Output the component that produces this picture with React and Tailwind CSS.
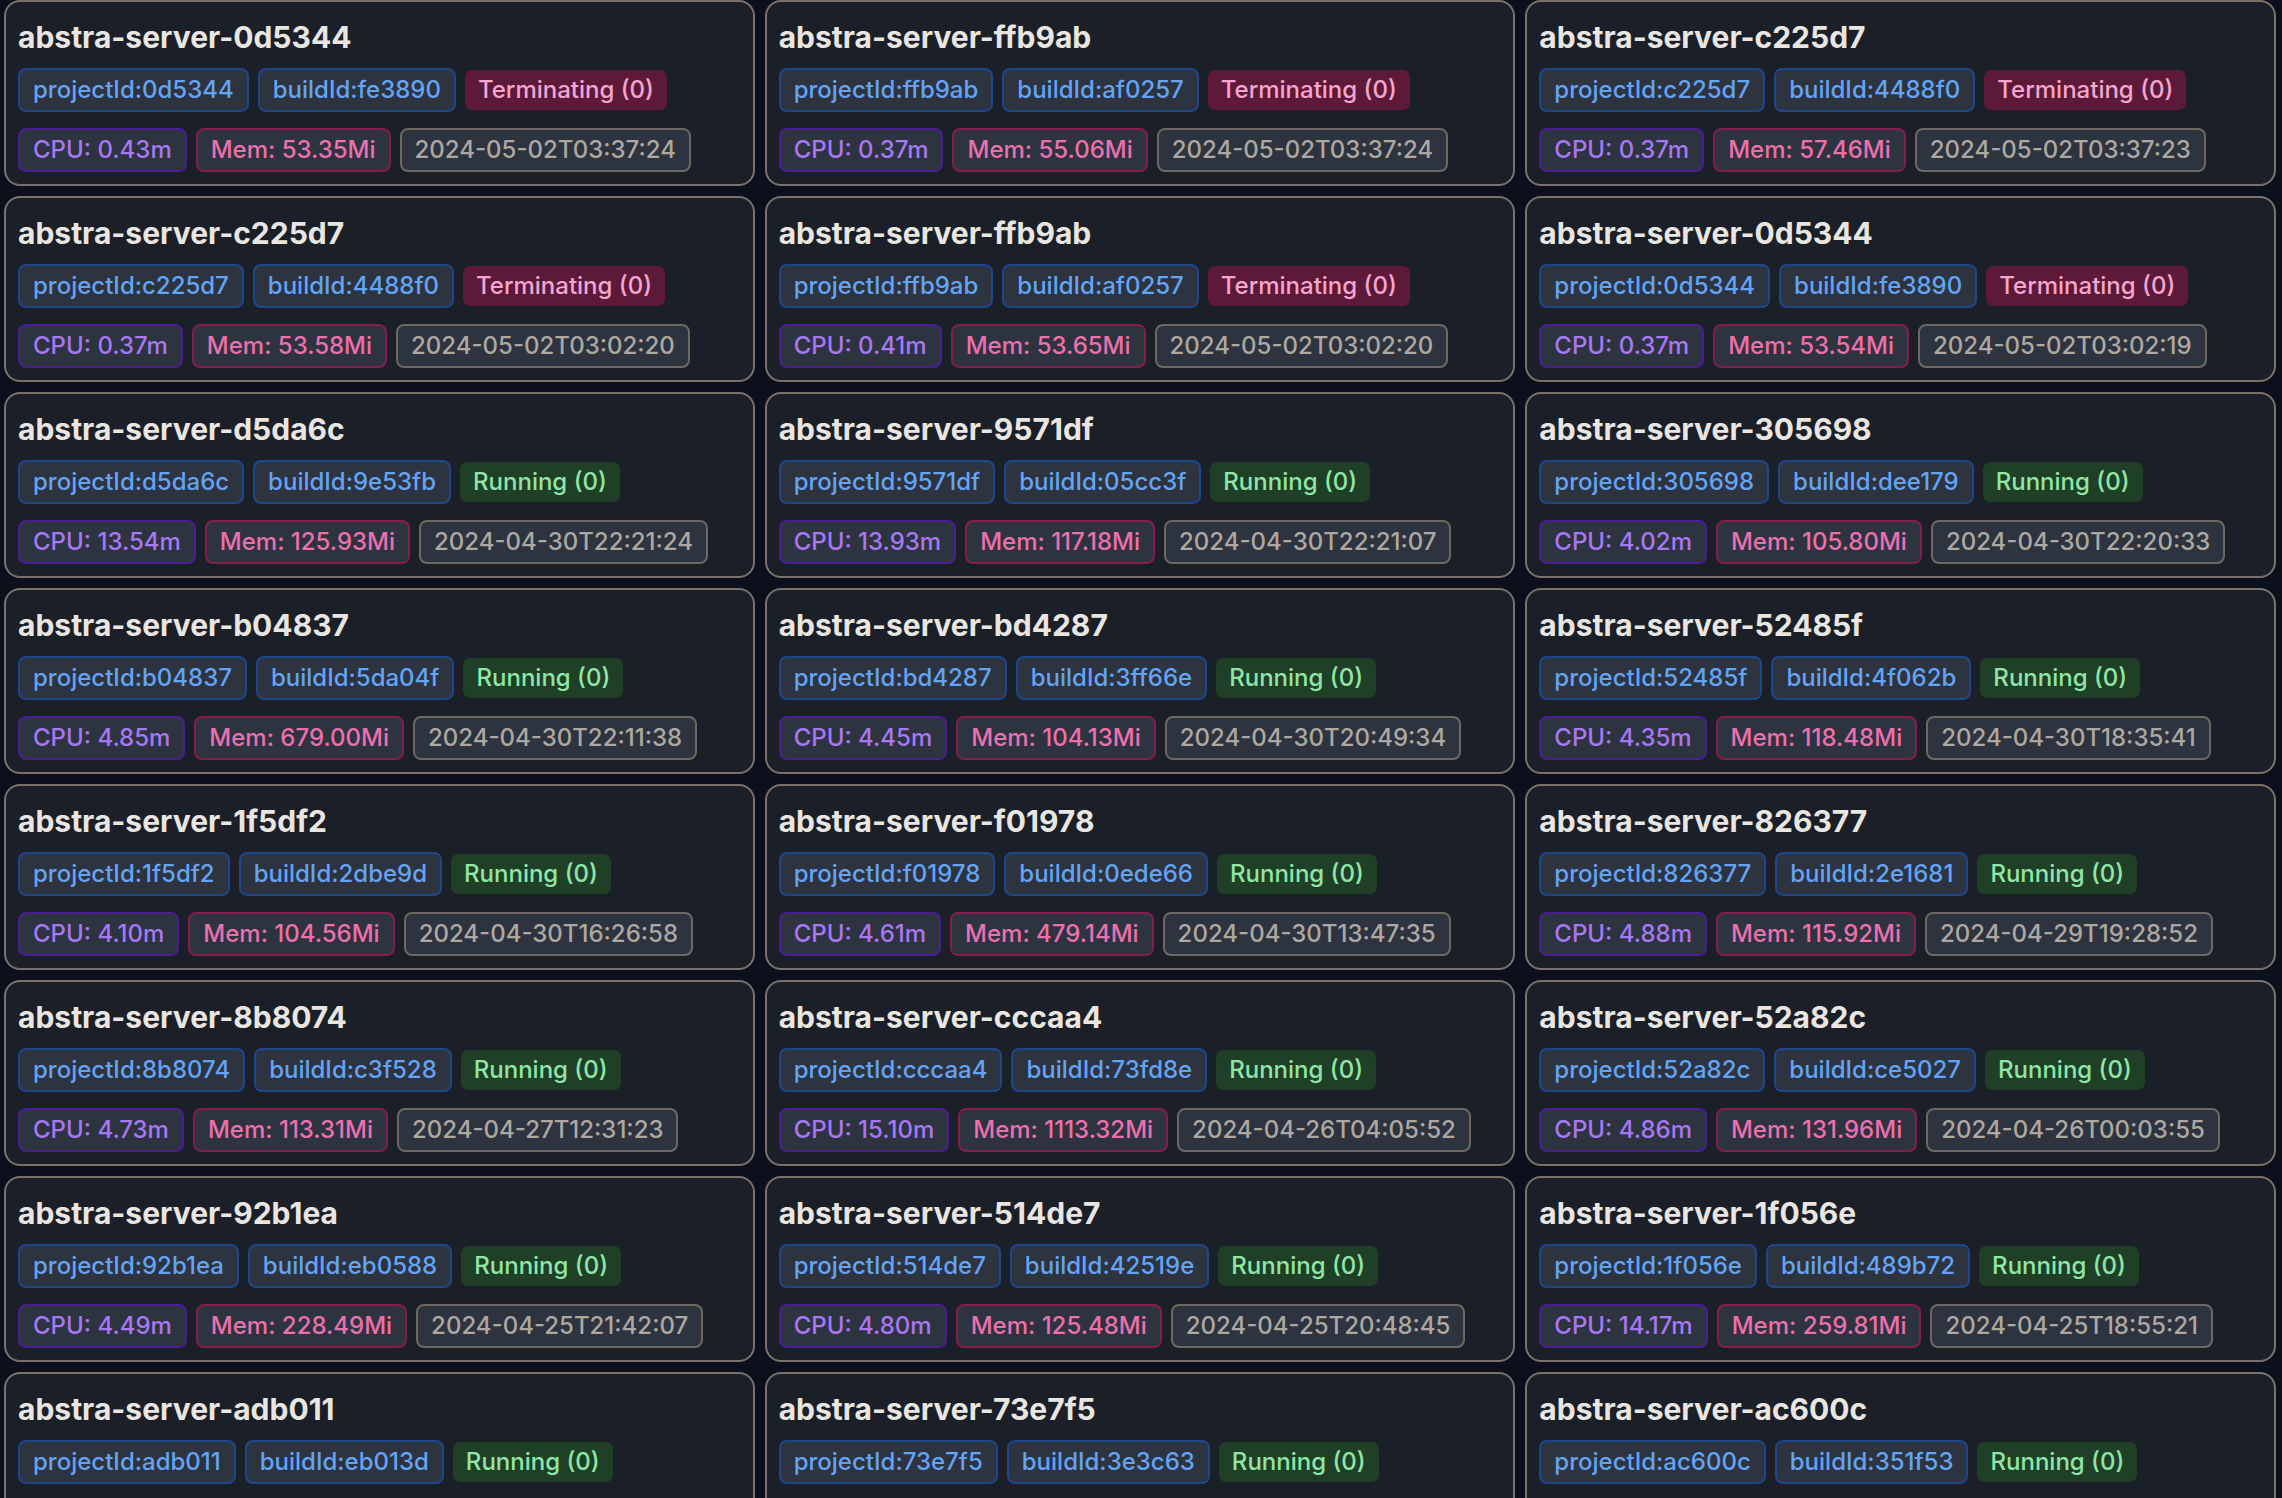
import React from "react";

const rows = [
  ["0d5344", "fe3890", "T", "0.43m", "53.35Mi", "2024-05-02T03:37:24"],
  ["ffb9ab", "af0257", "T", "0.37m", "55.06Mi", "2024-05-02T03:37:24"],
  ["c225d7", "4488f0", "T", "0.37m", "57.46Mi", "2024-05-02T03:37:23"],
  ["c225d7", "4488f0", "T", "0.37m", "53.58Mi", "2024-05-02T03:02:20"],
  ["ffb9ab", "af0257", "T", "0.41m", "53.65Mi", "2024-05-02T03:02:20"],
  ["0d5344", "fe3890", "T", "0.37m", "53.54Mi", "2024-05-02T03:02:19"],
  ["d5da6c", "9e53fb", "R", "13.54m", "125.93Mi", "2024-04-30T22:21:24"],
  ["9571df", "05cc3f", "R", "13.93m", "117.18Mi", "2024-04-30T22:21:07"],
  ["305698", "dee179", "R", "4.02m", "105.80Mi", "2024-04-30T22:20:33"],
  ["b04837", "5da04f", "R", "4.85m", "679.00Mi", "2024-04-30T22:11:38"],
  ["bd4287", "3ff66e", "R", "4.45m", "104.13Mi", "2024-04-30T20:49:34"],
  ["52485f", "4f062b", "R", "4.35m", "118.48Mi", "2024-04-30T18:35:41"],
  ["1f5df2", "2dbe9d", "R", "4.10m", "104.56Mi", "2024-04-30T16:26:58"],
  ["f01978", "0ede66", "R", "4.61m", "479.14Mi", "2024-04-30T13:47:35"],
  ["826377", "2e1681", "R", "4.88m", "115.92Mi", "2024-04-29T19:28:52"],
  ["8b8074", "c3f528", "R", "4.73m", "113.31Mi", "2024-04-27T12:31:23"],
  ["cccaa4", "73fd8e", "R", "15.10m", "1113.32Mi", "2024-04-26T04:05:52"],
  ["52a82c", "ce5027", "R", "4.86m", "131.96Mi", "2024-04-26T00:03:55"],
  ["92b1ea", "eb0588", "R", "4.49m", "228.49Mi", "2024-04-25T21:42:07"],
  ["514de7", "42519e", "R", "4.80m", "125.48Mi", "2024-04-25T20:48:45"],
  ["1f056e", "489b72", "R", "14.17m", "259.81Mi", "2024-04-25T18:55:21"],
  ["adb011", "eb013d", "R", "4.52m", "118.20Mi", "2024-04-25T16:12:40"],
  ["73e7f5", "3e3c63", "R", "4.61m", "121.07Mi", "2024-04-25T15:30:18"],
  ["ac600c", "351f53", "R", "4.38m", "109.66Mi", "2024-04-25T14:02:51"],
];

function Tag({ className, children }) {
  return (
    <span
      className={
        "inline-flex items-center h-[44px] px-[13px] rounded-[8px] border-2 bg-[#2d333f] text-[24px] leading-[28px] font-medium whitespace-nowrap " +
        className
      }
    >
      {children}
    </span>
  );
}

function Card({ r }) {
  const [pid, bid, st, cpu, mem, date] = r;
  return (
    <div className="h-[186px] rounded-[16px] border-2 border-[#79716a] bg-[#1b1f27] pl-[12px] pt-[17px] overflow-hidden">
      <div className="text-[30px] leading-[36px] font-bold text-[#e9e6e2]">
        abstra-server-{pid}
      </div>
      <div className="mt-[13px] flex items-center gap-[9px]">
        <Tag className="border-[#1e468c] text-[#63a4f5]">projectId:{pid}</Tag>
        <Tag className="border-[#1e468c] text-[#63a4f5]">buildId:{bid}</Tag>
        {st === "T" ? (
          <span className="inline-flex items-center h-[40px] px-[13px] rounded-[7px] bg-[#5c1a38] text-[#f5a5cf] text-[24px] leading-[28px] font-medium whitespace-nowrap">
            Terminating (0)
          </span>
        ) : (
          <span className="inline-flex items-center h-[40px] px-[13px] rounded-[7px] bg-[#1f3f27] text-[#8fe6a6] text-[24px] leading-[28px] font-medium whitespace-nowrap">
            Running (0)
          </span>
        )}
      </div>
      <div className="mt-[16px] flex items-center gap-[9px]">
        <Tag className="border-[#4a1d94] text-[#a877f3]">CPU: {cpu}</Tag>
        <Tag className="border-[#861c4c] text-[#ec6fae]">Mem: {mem}</Tag>
        <Tag className="border-[#6f6860] text-[#aea8a1]">{date}</Tag>
      </div>
    </div>
  );
}

export default function App() {
  return (
    <div className="w-[2282px] h-[1498px] overflow-hidden bg-[#0c101c] font-[family-name:Inter,'Noto_Sans',sans-serif]">
      <div className="grid grid-cols-3 gap-x-[10px] gap-y-[10px] pl-[4px] pr-[6px]">
        {rows.map((r, i) => (
          <Card key={i} r={r} />
        ))}
      </div>
    </div>
  );
}
